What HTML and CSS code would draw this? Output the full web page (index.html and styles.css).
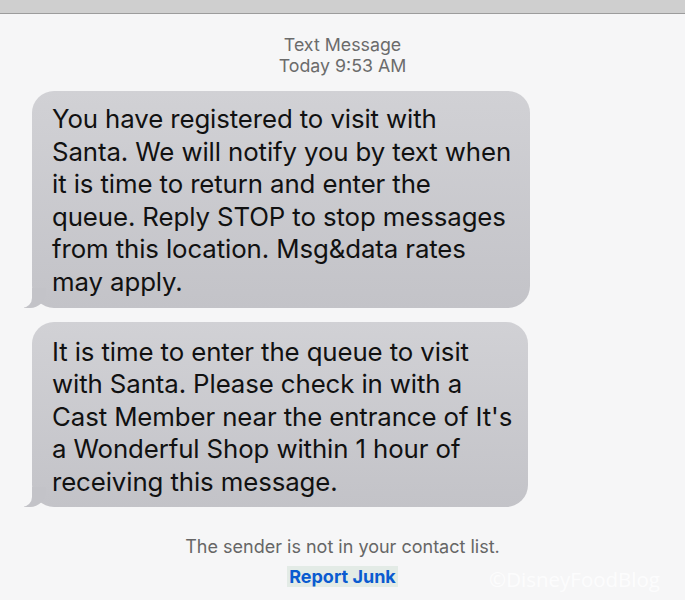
FILE: index.html
```html
<!DOCTYPE html>
<html lang="en">
<head>
    <meta charset="UTF-8">
    <meta name="viewport" content="width=device-width, initial-scale=1.0">
    <title>Text Message</title>
    <link rel="stylesheet" href="styles.css">
</head>
<body>
    <div class="topbar"></div>
    <div class="thread">
        <div class="stamp">
            <div>Text Message</div>
            <div>Today 9:53 AM</div>
        </div>
        <div class="bubble first">
            You have registered to visit with Santa. We will notify you by text when it is time to return and enter the queue. Reply STOP to stop messages from this location. Msg&amp;data rates may apply.
        </div>
        <div class="bubble second">
            It is time to enter the queue to visit with Santa. Please check in with a Cast Member near the entrance of It's a Wonderful Shop within 1 hour of receiving this message.
        </div>
        <div class="notice">
            <div>The sender is not in your contact list.</div>
            <a class="report" href="#">Report Junk</a>
        </div>
    </div>
    <div class="watermark">&copy;DisneyFoodBlog</div>
</body>
</html>
```

FILE: styles.css
```css
body {
    font-family: Inter, "Noto Sans", sans-serif;
    background-color: #f6f6f7;
    margin: 0;
    padding: 0;
    height: 600px;
    overflow: hidden;
    position: relative;
}
.topbar {
    height: 13px;
    background-color: #cfcfcf;
    border-bottom: 1px solid #9c9c9c;
}
.thread {
    padding: 20px 0 0 32px;
}
.stamp {
    text-align: center;
    color: #6b6b6b;
    font-size: 17.8px;
    line-height: 21px;
    margin-left: -32px;
}
.bubble {
    position: relative;
    width: 467px;
    padding: 12px 11px 9px 20px;
    border-radius: 22px;
    background: linear-gradient(#d1d1d5, #c3c3c8);
    color: #111;
    font-size: 25.8px;
    line-height: 32.6px;
    letter-spacing: -0.1px;
}
.first {
    margin-top: 15px;
}
.second {
    margin-top: 14px;
    padding-top: 14px;
    padding-bottom: 8px;
    padding-right: 9px;
}
.bubble::before {
    content: "";
    position: absolute;
    bottom: 0;
    left: -8px;
    width: 22px;
    height: 20px;
    background: #c3c3c8;
    border-bottom-right-radius: 16px;
}
.bubble::after {
    content: "";
    position: absolute;
    bottom: 0;
    left: -12px;
    width: 12px;
    height: 21px;
    background: #f6f6f7;
    border-bottom-right-radius: 10px;
}
.notice {
    text-align: center;
    color: #666;
    font-size: 18px;
    margin: 25px 0 0 -32px;
    line-height: 30px;
}
.report {
    color: #0a5bd0;
    font-weight: bold;
    text-decoration: none;
    background-color: #e3ebe6;
    padding: 0 2px;
}
.watermark {
    position: absolute;
    right: 25px;
    bottom: 7px;
    color: rgba(255, 255, 255, 0.75);
    font-family: "Open Sans", sans-serif;
    font-size: 20.5px;
}
```
